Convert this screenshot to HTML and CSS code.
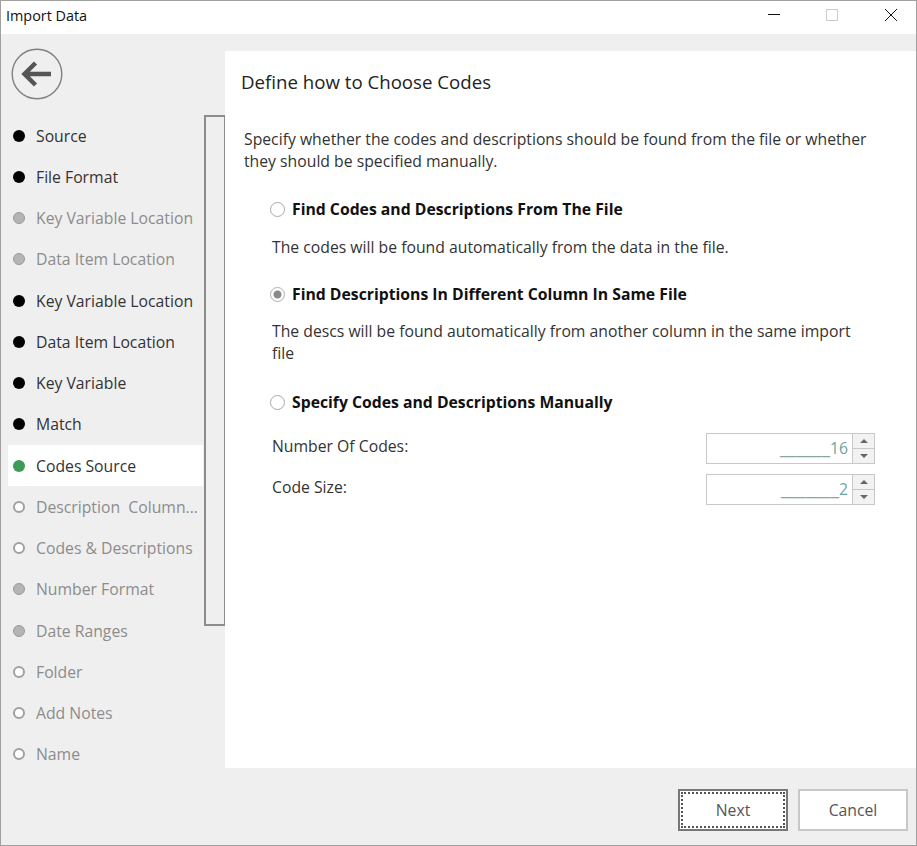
FILE: index.html
```html
<!DOCTYPE html>
<html lang="en">
<head>
  <meta charset="UTF-8" />
  <title>Import Data</title>
  <link rel="stylesheet" href="styles.css">
</head>
<body>
  <div class="window">
    <div class="titlebar">
      <div class="title">Import Data</div>
      <div class="win-buttons">
        <svg class="win-btn" width="14" height="14" viewBox="0 0 14 14"><path d="M2 6.5H14" stroke="#111" fill="none"/></svg>
        <svg class="win-btn" width="14" height="14" viewBox="0 0 14 14"><rect x="1.5" y="1.5" width="11" height="11" stroke="#ccc" fill="none"/></svg>
        <svg class="win-btn" width="14" height="14" viewBox="0 0 14 14"><path d="M1 1L13 13M13 1L1 13" stroke="#111" fill="none"/></svg>
      </div>
    </div>

    <div class="main">
      <div class="sidebar">
        <div class="back">
          <svg width="52" height="52" viewBox="0 0 52 52">
            <circle cx="26" cy="26" r="24.8" fill="none" stroke="#808080" stroke-width="1.4"/>
            <path d="M40 26H15M24.5 15L13.5 26L24.5 37" fill="none" stroke="#555" stroke-width="4.5"/>
          </svg>
        </div>
        <div class="steps-wrap">
          <div class="steps">
            <div class="step done"><span class="dot"></span>Source</div>
            <div class="step done"><span class="dot"></span>File Format</div>
            <div class="step skipped"><span class="dot"></span>Key Variable Location</div>
            <div class="step skipped"><span class="dot"></span>Data Item Location</div>
            <div class="step done"><span class="dot"></span>Key Variable Location</div>
            <div class="step done"><span class="dot"></span>Data Item Location</div>
            <div class="step done"><span class="dot"></span>Key Variable</div>
            <div class="step done"><span class="dot"></span>Match</div>
            <div class="step current"><span class="dot"></span>Codes Source</div>
            <div class="step todo"><span class="dot"></span>Description&nbsp; Column...</div>
            <div class="step todo"><span class="dot"></span>Codes &amp; Descriptions</div>
            <div class="step skipped"><span class="dot"></span>Number Format</div>
            <div class="step skipped"><span class="dot"></span>Date Ranges</div>
            <div class="step todo"><span class="dot"></span>Folder</div>
            <div class="step todo"><span class="dot"></span>Add Notes</div>
            <div class="step todo"><span class="dot"></span>Name</div>
          </div>
          <div class="rail"></div>
        </div>
      </div>

      <div class="panel">
        <h2>Define how to Choose Codes</h2>
        <p class="intro">Specify whether the codes and descriptions should be found from the file or whether they should be specified manually.</p>

        <div class="option first"><span class="radio"></span>Find Codes and Descriptions From The File</div>
        <p class="hint">The codes will be found automatically from the data in the file.</p>

        <div class="option second"><span class="radio checked"></span>Find Descriptions In Different Column In Same File</div>
        <p class="hint wrap">The descs will be found automatically from another column in the same import file</p>

        <div class="option third"><span class="radio"></span>Specify Codes and Descriptions Manually</div>

        <div class="field">
          <label>Number Of Codes:</label>
          <div class="spin">
            <div class="spin-value"><span class="mask">______</span>16</div>
            <div class="spin-btns">
              <div class="spin-btn"><span class="up"></span></div>
              <div class="spin-btn"><span class="down"></span></div>
            </div>
          </div>
        </div>
        <div class="field">
          <label>Code Size:</label>
          <div class="spin">
            <div class="spin-value"><span class="mask">_______</span>2</div>
            <div class="spin-btns">
              <div class="spin-btn"><span class="up"></span></div>
              <div class="spin-btn"><span class="down"></span></div>
            </div>
          </div>
        </div>
      </div>
    </div>

    <div class="footer">
      <button class="btn default"><span>Next</span></button>
      <button class="btn">Cancel</button>
    </div>
  </div>
</body>
</html>
```

FILE: styles.css
```css
html, body {
  margin: 0;
  height: 100%;
}
body {
  font-family: 'Open Sans', 'Noto Sans', sans-serif;
  font-size: 15.75px;
  color: #333;
  overflow: hidden;
}
.window {
  box-sizing: border-box;
  height: 846px;
  border: 1px solid #a0a0a0;
  background: #efefef;
  display: flex;
  flex-direction: column;
}
.titlebar {
  height: 33px;
  background: #fff;
  display: flex;
  justify-content: space-between;
  align-items: center;
  flex-shrink: 0;
}
.title {
  padding-left: 5px;
  padding-bottom: 5px;
  font-size: 14.4px;
  color: #111;
}
.win-buttons {
  display: flex;
  gap: 45px;
  padding-right: 18px;
  padding-bottom: 5px;
}
.main {
  flex: 1;
  display: flex;
  min-height: 0;
}
.sidebar {
  width: 224px;
  flex-shrink: 0;
  padding-top: 14px;
}
.back {
  height: 67px;
  padding-left: 10px;
  box-sizing: border-box;
}
.steps-wrap {
  display: flex;
  padding-left: 7px;
}
.steps {
  width: 195px;
  flex-shrink: 0;
}
.step {
  height: 41.25px;
  display: flex;
  align-items: center;
  white-space: nowrap;
  padding-left: 5px;
}
.dot {
  box-sizing: border-box;
  width: 12px;
  height: 12px;
  border-radius: 50%;
  margin-right: 11px;
  flex-shrink: 0;
}
.step.done .dot { background: #000; }
.step.skipped { color: #8c8c8c; }
.step.skipped .dot { background: #b4b4b4; border: 1px solid #999; }
.step.todo { color: #8c8c8c; }
.step.todo .dot { background: #fff; border: 2px solid #a0a0a0; }
.step.current { background: #fff; }
.step.current .dot { background: #3f9a55; }
.rail {
  box-sizing: border-box;
  width: 21px;
  height: 511px;
  margin-left: 1px;
  border: 2px solid #8c8c8c;
  border-right-width: 1px;
  background: #efefef;
}
.panel {
  flex: 1;
  margin-top: 17px;
  background: #fff;
  padding: 19px 41px 0 16px;
}
h2 {
  margin: 0 0 34px 0;
  font-size: 18.67px;
  font-weight: 400;
  line-height: 24px;
  color: #222;
}
.intro {
  margin: 0 0 0 3px;
  line-height: 22px;
}
.option {
  display: flex;
  align-items: center;
  font-weight: 700;
  color: #111;
  line-height: 22px;
  margin-left: 29px;
}
.option.first { margin-top: 26px; }
.option.second { margin-top: 25px; }
.option.third { margin-top: 27px; }
.radio {
  box-sizing: border-box;
  width: 15px;
  height: 15px;
  border: 1px solid #a8a8a8;
  border-radius: 50%;
  margin-right: 7px;
  flex-shrink: 0;
}
.radio.checked {
  border-color: #b0b0b0;
  background: radial-gradient(circle, #8a8a8a 0 3.5px, #fff 4.5px);
}
.hint {
  margin: 16px 0 0 31px;
  line-height: 22px;
}
.hint.wrap { margin-top: 15px; }
.field {
  display: flex;
  justify-content: space-between;
  align-items: center;
  margin: 20px 0 0 31px;
  height: 31px;
}
.field + .field { margin-top: 10px; }
.field label { padding-bottom: 6px; }
.spin {
  box-sizing: border-box;
  width: 169px;
  height: 31px;
  border: 1px solid #c8c8c8;
  display: flex;
  background: #fff;
}
.spin-value {
  flex: 1;
  text-align: right;
  padding-right: 4px;
  line-height: 29px;
  color: #6aa6a0;
}
.mask {
  color: #8aa89a;
  font-size: 19px;
  line-height: 0;
}
.spin-btns {
  width: 21px;
  border-left: 1px solid #c8c8c8;
  display: flex;
  flex-direction: column;
}
.spin-btn {
  flex: 1;
  background: #f2f2f2;
  display: flex;
  align-items: center;
  justify-content: center;
}
.spin-btn + .spin-btn { border-top: 1px solid #c8c8c8; }
.up, .down {
  width: 0;
  height: 0;
  border-left: 4px solid transparent;
  border-right: 4px solid transparent;
}
.up { border-bottom: 4px solid #666; }
.down { border-top: 4px solid #666; }
.footer {
  height: 77px;
  flex-shrink: 0;
  display: flex;
  justify-content: flex-end;
  gap: 10px;
  padding: 21px 8px 0 0;
  box-sizing: border-box;
}
.btn {
  box-sizing: border-box;
  width: 110px;
  height: 42px;
  background: #fff;
  border: 2px solid #c8c8c8;
  font-family: inherit;
  font-size: 15.75px;
  color: #555;
  padding: 0;
}
.btn.default {
  border-color: #777;
  padding: 1px;
}
.btn.default span {
  display: flex;
  height: 100%;
  align-items: center;
  justify-content: center;
  border: 2px dotted #555;
  box-sizing: border-box;
}
```
